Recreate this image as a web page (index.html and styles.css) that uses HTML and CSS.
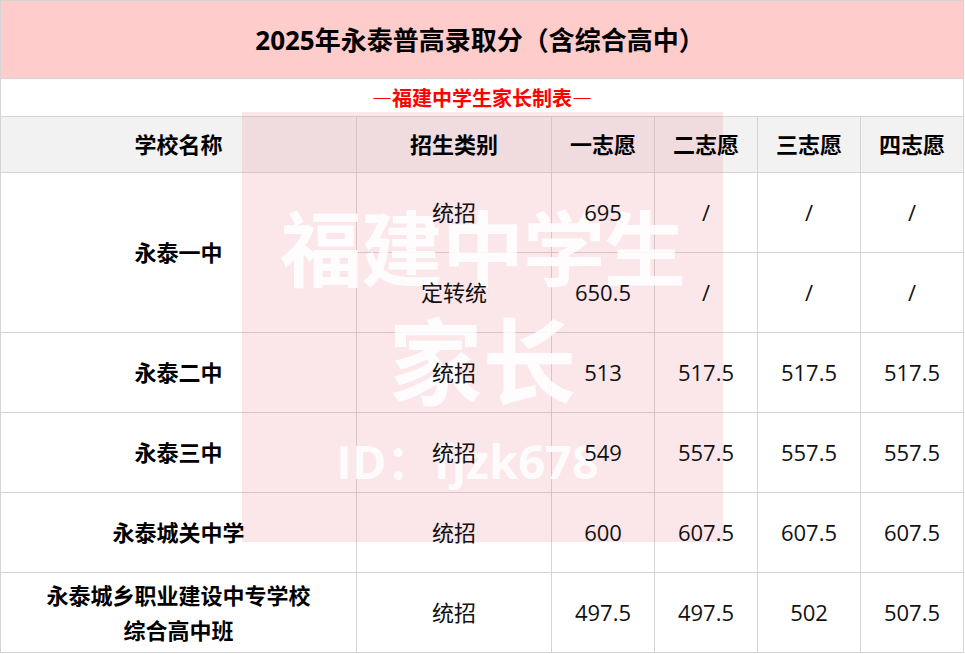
FILE: index.html
```html
<!DOCTYPE html>
<html lang="zh-CN">
<head>
<meta charset="utf-8">
<title>2025年永泰普高录取分</title>
<link rel="stylesheet" href="styles.css">
</head>
<body>
<div class="page">
  <div class="sheet">
    <div class="cell title"><span class="t">2025年永泰普高录取分（含综合高中）</span></div>
    <div class="cell subtitle"><span class="t">—福建中学生家长制表—</span></div>

    <div class="cell head"><span class="t">学校名称</span></div>
    <div class="cell head"><span class="t">招生类别</span></div>
    <div class="cell head"><span class="t">一志愿</span></div>
    <div class="cell head"><span class="t">二志愿</span></div>
    <div class="cell head"><span class="t">三志愿</span></div>
    <div class="cell head"><span class="t">四志愿</span></div>

    <div class="cell name span2"><span class="t">永泰一中</span></div>
    <div class="cell"><span class="t">统招</span></div>
    <div class="cell"><span class="t">695</span></div>
    <div class="cell"><span class="t">/</span></div>
    <div class="cell"><span class="t">/</span></div>
    <div class="cell"><span class="t">/</span></div>
    <div class="cell"><span class="t">定转统</span></div>
    <div class="cell"><span class="t">650.5</span></div>
    <div class="cell"><span class="t">/</span></div>
    <div class="cell"><span class="t">/</span></div>
    <div class="cell"><span class="t">/</span></div>

    <div class="cell name"><span class="t">永泰二中</span></div>
    <div class="cell"><span class="t">统招</span></div>
    <div class="cell"><span class="t">513</span></div>
    <div class="cell"><span class="t">517.5</span></div>
    <div class="cell"><span class="t">517.5</span></div>
    <div class="cell"><span class="t">517.5</span></div>

    <div class="cell name"><span class="t">永泰三中</span></div>
    <div class="cell"><span class="t">统招</span></div>
    <div class="cell"><span class="t">549</span></div>
    <div class="cell"><span class="t">557.5</span></div>
    <div class="cell"><span class="t">557.5</span></div>
    <div class="cell"><span class="t">557.5</span></div>

    <div class="cell name"><span class="t">永泰城关中学</span></div>
    <div class="cell"><span class="t">统招</span></div>
    <div class="cell"><span class="t">600</span></div>
    <div class="cell"><span class="t">607.5</span></div>
    <div class="cell"><span class="t">607.5</span></div>
    <div class="cell"><span class="t">607.5</span></div>

    <div class="cell name multi"><span class="t">永泰城乡职业建设中专学校<br>综合高中班</span></div>
    <div class="cell"><span class="t">统招</span></div>
    <div class="cell"><span class="t">497.5</span></div>
    <div class="cell"><span class="t">497.5</span></div>
    <div class="cell"><span class="t">502</span></div>
    <div class="cell"><span class="t">507.5</span></div>
  </div>

  <div class="watermark" aria-hidden="true">
    <div class="wm-line wm-1">福建中学生</div>
    <div class="wm-line wm-2">家长</div>
    <div class="wm-line wm-3">ID：fjzk678</div>
  </div>
</div>
</body>
</html>
```

FILE: styles.css
```css
html, body {
  margin: 0;
  padding: 0;
  background: #ffffff;
}

.page {
  position: relative;
  width: 965px;
  height: 654px;
  overflow: hidden;
}

.sheet {
  display: grid;
  grid-template-columns: 355px 194px 102px 102px 102px 102px;
  grid-template-rows: 77px 37px 55px 79px 79px 79px 79px 79px 79px;
  gap: 1px;
  padding: 1px;
  width: 964px;
  box-sizing: border-box;
  background: #d4d4d4;
  font-family: "Open Sans", "Noto Sans CJK SC", sans-serif;
  font-size: 22px;
  color: #111111;
}

.cell {
  background: #ffffff;
  display: flex;
  align-items: center;
  justify-content: center;
  text-align: center;
  line-height: 1.2;
}

.t {
  position: relative;
  z-index: 2;
}

.title {
  grid-column: 1 / span 6;
  background: #ffcccc;
  font-size: 26px;
  font-weight: 700;
  color: #000000;
  padding-top: 2px;
  padding-right: 4px;
}

.subtitle {
  grid-column: 1 / span 6;
  font-family: "Noto Sans CJK SC", sans-serif;
  font-size: 20px;
  font-weight: 700;
  color: #ff0000;
}

.head {
  background: #f2f2f2;
  font-weight: 700;
  color: #000000;
}

.name {
  font-weight: 700;
  color: #000000;
}

.span2 {
  grid-row: span 2;
}

.multi {
  line-height: 1.55;
}

.watermark {
  position: absolute;
  z-index: 1;
  left: 242px;
  top: 112px;
  width: 481px;
  height: 430px;
  background: rgba(232, 120, 145, 0.19);
  display: flex;
  flex-direction: column;
  align-items: center;
  padding-top: 83px;
  box-sizing: border-box;
  font-family: "Noto Sans CJK SC", sans-serif;
  font-weight: 700;
  color: rgba(255, 255, 255, 0.88);
  pointer-events: none;
}

.wm-line {
  white-space: nowrap;
}

.wm-1 {
  font-size: 82px;
  line-height: 100px;
  letter-spacing: -1px;
}

.wm-2 {
  font-size: 94px;
  line-height: 124px;
}

.wm-3 {
  font-family: "Open Sans", "Noto Sans CJK SC", sans-serif;
  font-size: 47px;
  line-height: 84px;
  padding-right: 30px;
}
```
